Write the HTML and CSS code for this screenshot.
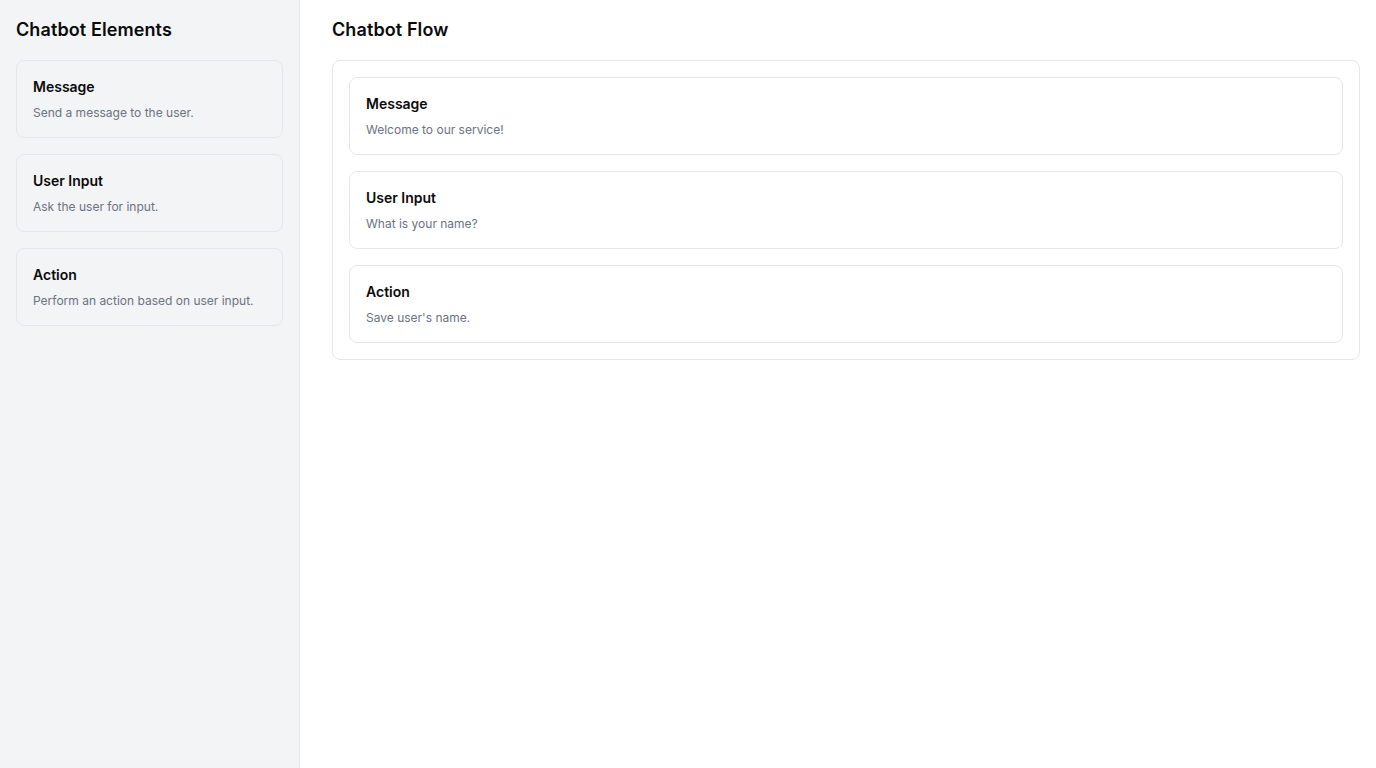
FILE: index.html
```html
<!DOCTYPE html>
<html lang="en">
<head>
<meta charset="utf-8">
<title>Chatbot Builder</title>
<link rel="stylesheet" href="styles.css">
</head>
<body>
<div class="app">
  <aside class="sidebar">
    <h2 class="heading">Chatbot Elements</h2>
    <div class="list">
      <div class="card card-side">
        <div class="card-title">Message</div>
        <div class="card-desc">Send a message to the user.</div>
      </div>
      <div class="card card-side">
        <div class="card-title">User Input</div>
        <div class="card-desc">Ask the user for input.</div>
      </div>
      <div class="card card-side">
        <div class="card-title">Action</div>
        <div class="card-desc">Perform an action based on user input.</div>
      </div>
    </div>
  </aside>
  <main class="main">
    <h2 class="heading">Chatbot Flow</h2>
    <div class="flow">
      <div class="card card-flow">
        <div class="card-title">Message</div>
        <div class="card-desc">Welcome to our service!</div>
      </div>
      <div class="card card-flow">
        <div class="card-title">User Input</div>
        <div class="card-desc">What is your name?</div>
      </div>
      <div class="card card-flow">
        <div class="card-title">Action</div>
        <div class="card-desc">Save user's name.</div>
      </div>
    </div>
  </main>
</div>
</body>
</html>
```
FILE: styles.css
```css
* { box-sizing: border-box; }
html, body { margin: 0; padding: 0; }
body {
  font-family: Inter, "Noto Sans", sans-serif;
  color: #111;
  background: #fff;
}
.app {
  display: flex;
  height: 768px;
}
.sidebar {
  width: 300px;
  flex-shrink: 0;
  background: #f3f4f6;
  border-right: 1px solid #e5e7eb;
  padding: 16px;
}
.main {
  flex: 1;
  padding: 16px 16px 16px 32px;
}
.heading {
  margin: 0 0 16px;
  font-size: 18px;
  line-height: 28px;
  font-weight: 600;
  letter-spacing: 0.1px;
  color: #0a0a0a;
}
.list, .flow {
  display: flex;
  flex-direction: column;
  gap: 16px;
}
.flow {
  border: 1px solid #e5e7eb;
  border-radius: 8px;
  padding: 16px;
}
.card {
  border: 1px solid #e5e7eb;
  border-radius: 8px;
  padding: 16px;
}
.card-side { background: #f3f4f6; }
.card-flow { background: #fff; }
.card-title {
  font-size: 14px;
  line-height: 20px;
  font-weight: 600;
  color: #0a0a0a;
}
.card-desc {
  margin-top: 7px;
  font-size: 12px;
  line-height: 17px;
  color: #6b7280;
}
```
